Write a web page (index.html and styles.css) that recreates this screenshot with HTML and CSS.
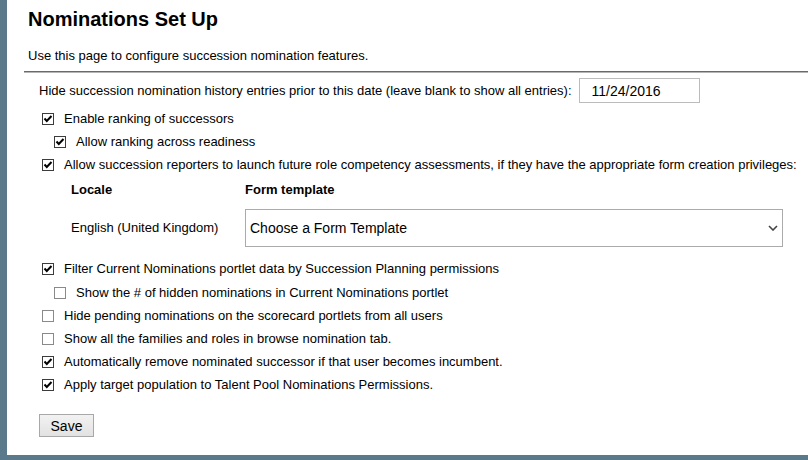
FILE: index.html
```html
<!DOCTYPE html>
<html>
<head>
<meta charset="utf-8">
<link rel="stylesheet" href="styles.css">
</head>
<body>
<div class="panel">
  <div class="head">
    <h1 class="title">Nominations Set Up</h1>
    <p class="intro">Use this page to configure succession nomination features.</p>
  </div>
  <div class="rule"></div>
  <div class="form">
    <div class="date-row">
      <span class="label">Hide succession nomination history entries prior to this date (leave blank to show all entries):</span>
      <span class="date-input">11/24/2016</span>
    </div>
    <div class="opt first">
      <span class="cb checked"><svg viewBox="0 0 12 12" width="12" height="12"><polyline points="2.5,5.5 4.8,8 9.5,3" fill="none" stroke="#000" stroke-width="2"/></svg></span>
      <span class="txt">Enable ranking of successors</span>
    </div>
    <div class="opt sub">
      <span class="cb checked"><svg viewBox="0 0 12 12" width="12" height="12"><polyline points="2.5,5.5 4.8,8 9.5,3" fill="none" stroke="#000" stroke-width="2"/></svg></span>
      <span class="txt">Allow ranking across readiness</span>
    </div>
    <div class="opt">
      <span class="cb checked"><svg viewBox="0 0 12 12" width="12" height="12"><polyline points="2.5,5.5 4.8,8 9.5,3" fill="none" stroke="#000" stroke-width="2"/></svg></span>
      <span class="txt">Allow succession reporters to launch future role competency assessments, if they have the appropriate form creation privileges:</span>
    </div>
    <div class="locale-table">
      <div class="trow thead">
        <span class="col1">Locale</span>
        <span class="col2">Form template</span>
      </div>
      <div class="trow tbody">
        <span class="col1">English (United Kingdom)</span>
        <span class="select">
          <span class="select-text">Choose a Form Template</span>
          <svg class="chev" viewBox="0 0 10 6" width="10" height="6"><polyline points="1,1 5,5 9,1" fill="none" stroke="#444" stroke-width="1.6"/></svg>
        </span>
      </div>
    </div>
    <div class="opt">
      <span class="cb checked"><svg viewBox="0 0 12 12" width="12" height="12"><polyline points="2.5,5.5 4.8,8 9.5,3" fill="none" stroke="#000" stroke-width="2"/></svg></span>
      <span class="txt">Filter Current Nominations portlet data by Succession Planning permissions</span>
    </div>
    <div class="opt sub gap1">
      <span class="cb"></span>
      <span class="txt">Show the # of hidden nominations in Current Nominations portlet</span>
    </div>
    <div class="opt">
      <span class="cb"></span>
      <span class="txt">Hide pending nominations on the scorecard portlets from all users</span>
    </div>
    <div class="opt">
      <span class="cb"></span>
      <span class="txt">Show all the families and roles in browse nomination tab.</span>
    </div>
    <div class="opt">
      <span class="cb checked"><svg viewBox="0 0 12 12" width="12" height="12"><polyline points="2.5,5.5 4.8,8 9.5,3" fill="none" stroke="#000" stroke-width="2"/></svg></span>
      <span class="txt">Automatically remove nominated successor if that user becomes incumbent.</span>
    </div>
    <div class="opt">
      <span class="cb checked"><svg viewBox="0 0 12 12" width="12" height="12"><polyline points="2.5,5.5 4.8,8 9.5,3" fill="none" stroke="#000" stroke-width="2"/></svg></span>
      <span class="txt">Apply target population to Talent Pool Nominations Permissions.</span>
    </div>
    <div class="actions">
      <span class="btn">Save</span>
    </div>
  </div>
</div>
</body>
</html>
```

FILE: styles.css
```css
html, body {
  margin: 0;
  padding: 0;
}
body {
  background: #5a7a8b;
  font-family: "Liberation Sans", Arial, sans-serif;
  color: #000;
  width: 808px;
  height: 460px;
  overflow: hidden;
}
.panel {
  margin-left: 7px;
  height: 455px;
  background: #fff;
  padding-top: 7px;
  box-sizing: border-box;
}
.head {
  padding-left: 21px;
}
.title {
  margin: 0;
  font-size: 20px;
  line-height: 24px;
  font-weight: bold;
}
.intro {
  margin: 17px 0 0;
  font-size: 13px;
  line-height: 16px;
}
.rule {
  margin: 7px 0 0 17px;
  height: 1px;
  background: #6a6a6a;
  border-bottom: 1px solid #b5b5b5;
}
.form {
  padding-left: 31px;
  font-size: 13px;
  line-height: 16px;
}
.date-row {
  display: flex;
  align-items: center;
  margin-top: 5px;
  height: 25px;
}
.label {
  margin-left: 1px;
}
.date-input {
  margin-left: 7px;
  width: 121px;
  height: 25px;
  box-sizing: border-box;
  border: 1px solid #bcbcbc;
  font-size: 14px;
  padding-left: 12px;
  display: flex;
  align-items: center;
}
.opt {
  display: flex;
  align-items: center;
  height: 23px;
  padding-left: 4px;
}
.opt.first {
  margin-top: 4px;
}
.opt.sub {
  padding-left: 16px;
}
.opt.gap1 {
  margin-top: 1px;
}
.cb {
  width: 12px;
  height: 12px;
  box-sizing: border-box;
  border: 1px solid #8a8a8a;
  background: #fff;
  flex: none;
  position: relative;
  margin-right: 10px;
}
.cb.checked {
  border-color: #3c3c3c;
}
.cb svg {
  position: absolute;
  left: -1px;
  top: -1px;
}
.txt {
  white-space: nowrap;
}
.locale-table {
  padding-left: 33px;
  padding-top: 6px;
  margin-bottom: 10px;
}
.trow {
  display: flex;
  align-items: center;
}
.thead {
  font-weight: bold;
  height: 16px;
}
.tbody {
  margin-top: 11px;
  height: 38px;
}
.col1 {
  width: 174px;
  flex: none;
}
.select {
  width: 538px;
  height: 38px;
  box-sizing: border-box;
  border: 1px solid #ababab;
  display: flex;
  align-items: center;
  justify-content: space-between;
  padding: 0 4px 0 4px;
  font-size: 14px;
}
.chev {
  margin-right: 0px;
}
.actions {
  margin-top: 18px;
  padding-left: 1px;
}
.btn {
  display: inline-flex;
  align-items: center;
  justify-content: center;
  width: 55px;
  height: 23px;
  box-sizing: border-box;
  border: 1px solid #a8a8a8;
  background: linear-gradient(#f2f2f2, #e2e2e2);
  font-size: 14px;
}
```
